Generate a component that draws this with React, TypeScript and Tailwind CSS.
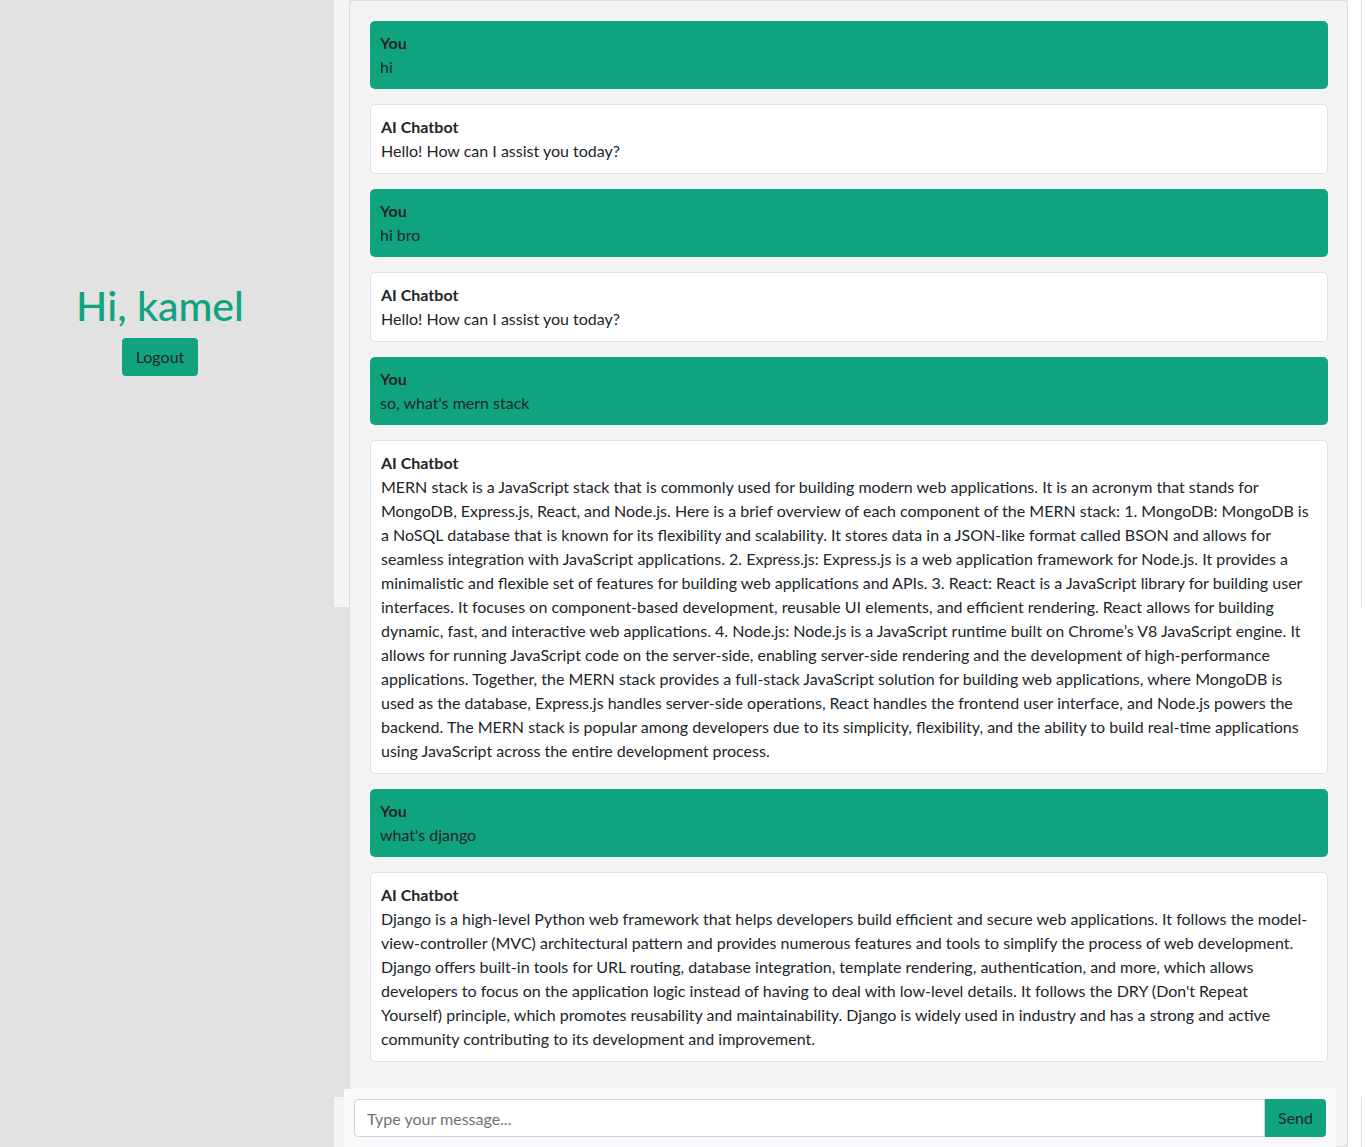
const messages = [
  { from: 'You', lines: ['hi'] },
  { from: 'AI Chatbot', lines: ['Hello! How can I assist you today?'] },
  { from: 'You', lines: ['hi bro'] },
  { from: 'AI Chatbot', lines: ['Hello! How can I assist you today?'] },
  { from: 'You', lines: ["so, what's mern stack"] },
  {
    from: 'AI Chatbot',
    lines: [
      'MERN stack is a JavaScript stack that is commonly used for building modern web applications. It is an acronym that stands for',
      'MongoDB, Express.js, React, and Node.js. Here is a brief overview of each component of the MERN stack: 1. MongoDB: MongoDB is',
      'a NoSQL database that is known for its flexibility and scalability. It stores data in a JSON-like format called BSON and allows for',
      'seamless integration with JavaScript applications. 2. Express.js: Express.js is a web application framework for Node.js. It provides a',
      'minimalistic and flexible set of features for building web applications and APIs. 3. React: React is a JavaScript library for building user',
      'interfaces. It focuses on component-based development, reusable UI elements, and efficient rendering. React allows for building',
      'dynamic, fast, and interactive web applications. 4. Node.js: Node.js is a JavaScript runtime built on Chrome\u2019s V8 JavaScript engine. It',
      'allows for running JavaScript code on the server-side, enabling server-side rendering and the development of high-performance',
      'applications. Together, the MERN stack provides a full-stack JavaScript solution for building web applications, where MongoDB is',
      'used as the database, Express.js handles server-side operations, React handles the frontend user interface, and Node.js powers the',
      'backend. The MERN stack is popular among developers due to its simplicity, flexibility, and the ability to build real-time applications',
      'using JavaScript across the entire development process.',
    ],
  },
  { from: 'You', lines: ["what's django"] },
  {
    from: 'AI Chatbot',
    lines: [
      'Django is a high-level Python web framework that helps developers build efficient and secure web applications. It follows the model-',
      'view-controller (MVC) architectural pattern and provides numerous features and tools to simplify the process of web development.',
      'Django offers built-in tools for URL routing, database integration, template rendering, authentication, and more, which allows',
      "developers to focus on the application logic instead of having to deal with low-level details. It follows the DRY (Don't Repeat",
      'Yourself) principle, which promotes reusability and maintainability. Django is widely used in industry and has a strong and active',
      'community contributing to its development and improvement.',
    ],
  },
];

function Message({ from, lines }: { from: string; lines: string[] }) {
  const mine = from === 'You';
  return (
    <div
      className={
        mine
          ? 'mb-[15px] rounded-[5px] bg-[#10a37f] p-[10px] text-[#212529]'
          : 'mb-[15px] rounded-[5px] border border-[#dee2e6] bg-white p-[10px] text-[#212529]'
      }
    >
      <div className="font-bold leading-6">{from}</div>
      {lines.map((line, i) => (
        <div key={i} className="whitespace-nowrap leading-6">
          {line}
        </div>
      ))}
    </div>
  );
}

export default function App() {
  return (
    <div
      className="relative flex h-[1147px] overflow-hidden bg-[#e2e2e2] text-base text-[#212529]"
      style={{ fontFamily: 'Lato, "Open Sans", sans-serif' }}
    >
      {/* sidebar */}
      <aside className="w-[334px] shrink-0">
        <div className="flex w-[320px] flex-col items-center pt-[282px]">
          <h1 className="mb-2 text-[41px] font-medium leading-[48px] text-[#10a37f]">Hi, kamel</h1>
          <button className="h-[38px] rounded bg-[#10a37f] px-[14px] text-[#212529]">Logout</button>
        </div>
      </aside>
      <div className="h-[607px] w-[15px] shrink-0 bg-[#f4f4f4]" />

      {/* chat */}
      <main className="h-[1147px] w-[999px] shrink-0 rounded-[5px] border border-[#dcdcdc] bg-[#f4f4f4] pl-5 pr-[19px] pt-5">
        {messages.map((m, i) => (
          <Message key={i} from={m.from} lines={m.lines} />
        ))}
      </main>

      <div className="flex flex-1 flex-col bg-white pl-[13px]">
        <div className="h-[607px] w-px bg-[#dddddd]" />
        <div className="flex-1" />
        <div className="h-[50px] w-px bg-[#dddddd]" />
      </div>

      {/* input bar */}
      <div className="absolute bottom-0 left-[334px] h-[50px] w-[10px] bg-[#f4f4f4]" />
      <form className="absolute left-[344px] top-[1089px] flex h-[58px] w-[992px] bg-[#f8f9fa] p-[10px]">
        <input
          className="h-[38px] flex-1 rounded-l border border-[#ced4da] bg-white px-3 text-base text-[#212529] placeholder:text-[#6c757d] outline-none"
          placeholder="Type your message..."
        />
        <button type="button" className="h-[38px] w-[61px] rounded-r bg-[#10a37f] text-[#212529]">
          Send
        </button>
      </form>
    </div>
  );
}
